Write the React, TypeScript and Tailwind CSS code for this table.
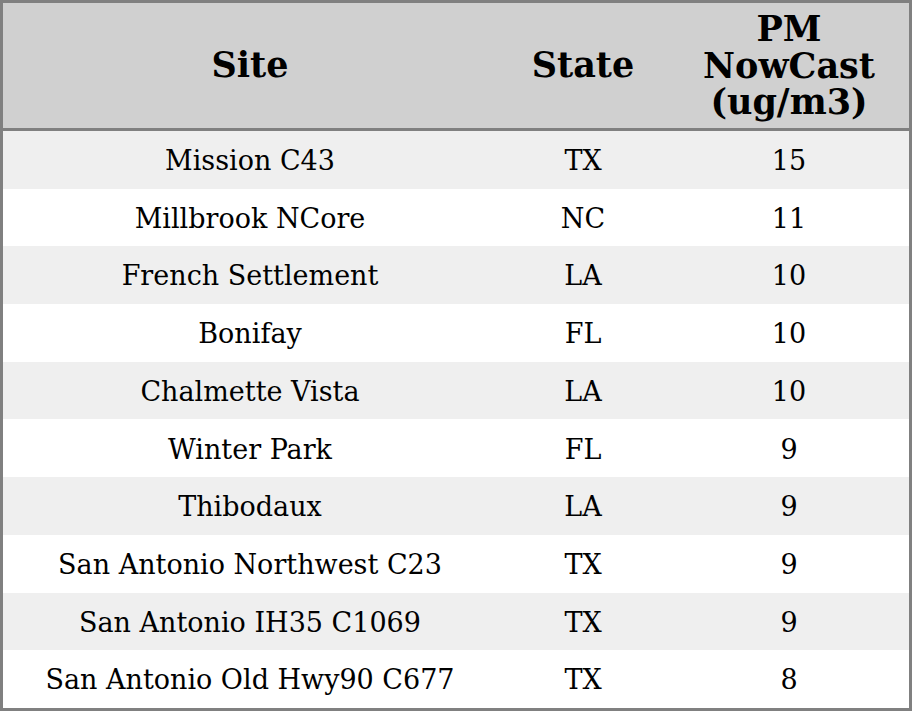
const rows = [
  { site: "Mission C43", state: "TX", pm: 15 },
  { site: "Millbrook NCore", state: "NC", pm: 11 },
  { site: "French Settlement", state: "LA", pm: 10 },
  { site: "Bonifay", state: "FL", pm: 10 },
  { site: "Chalmette Vista", state: "LA", pm: 10 },
  { site: "Winter Park", state: "FL", pm: 9 },
  { site: "Thibodaux", state: "LA", pm: 9 },
  { site: "San Antonio Northwest C23", state: "TX", pm: 9 },
  { site: "San Antonio IH35 C1069", state: "TX", pm: 9 },
  { site: "San Antonio Old Hwy90 C677", state: "TX", pm: 8 },
]

export default function App() {
  return (
    <div className="w-[912px] h-[711px] bg-white font-['DejaVu_Serif',serif] text-black">
      <div className="border-[3px] border-[#808080] w-full h-full">
        <div className="grid grid-cols-[494px_172px_240px] h-[128px] bg-[#d0d0d0] border-b-[3px] border-[#808080] font-bold text-[35px] leading-[36.5px] text-center items-center">
          <div>Site</div>
          <div>State</div>
          <div className="pt-[1px]">
            PM
            <br />
            NowCast
            <br />
            (ug/m3)
          </div>
        </div>
        {rows.map((r, i) => (
          <div
            key={i}
            className={`grid grid-cols-[494px_172px_240px] h-[57.7px] pt-[3px] items-center text-center text-[27px] ${
              i % 2 === 0 ? "bg-[#efefef]" : "bg-white"
            }`}
          >
            <div>{r.site}</div>
            <div>{r.state}</div>
            <div>{r.pm}</div>
          </div>
        ))}
      </div>
    </div>
  )
}
